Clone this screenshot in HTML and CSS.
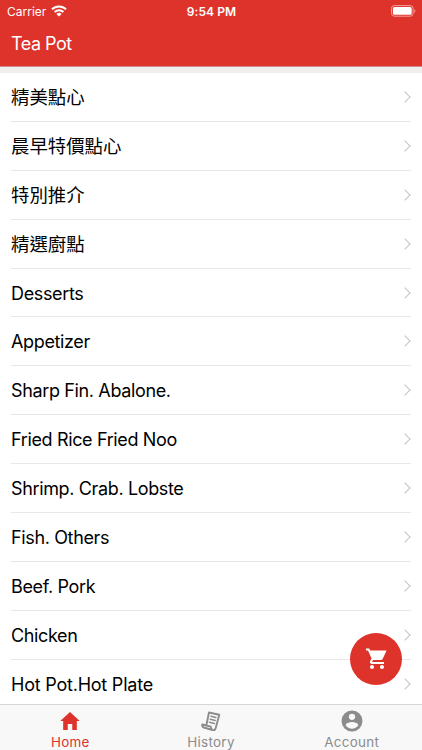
FILE: index.html
```html
<!DOCTYPE html>
<html lang="en">
<head>
    <meta charset="UTF-8">
    <meta name="viewport" content="width=device-width, initial-scale=1.0">
    <title>Tea Pot</title>
    <link rel="stylesheet" href="styles.css">
</head>
<body>
    <div class="app">
        <header class="header">
            <div class="status">
                <div class="carrier">
                    <span>Carrier</span>
                    <svg class="wifi" viewBox="0 0 16 12">
                        <path d="M1 4.3a10 10 0 0 1 14 0M3.6 7a6.3 6.3 0 0 1 8.8 0" fill="none" stroke="#fff" stroke-width="2"/>
                        <path d="M8 11.6L5.4 9a3.7 3.7 0 0 1 5.2 0z" fill="#fff"/>
                    </svg>
                </div>
                <div class="time">9:54 PM</div>
                <svg class="battery" viewBox="0 0 25 12">
                    <rect x="0.5" y="0.6" width="21.6" height="10.6" rx="2.8" fill="none" stroke="#f2a19c"/>
                    <rect x="1.9" y="2" width="18.8" height="7.8" rx="1.6" fill="#fff"/>
                    <path d="M23.4 4v4c1.3-.7 1.3-3.3 0-4z" fill="#f2a19c"/>
                </svg>
            </div>
            <h1 class="title">Tea Pot</h1>
        </header>

        <ul class="menu">
            <li><span class="zh">精美點心</span><i class="arrow"></i></li>
            <li><span class="zh">晨早特價點心</span><i class="arrow"></i></li>
            <li><span class="zh">特別推介</span><i class="arrow"></i></li>
            <li><span class="zh">精選廚點</span><i class="arrow"></i></li>
            <li><span>Desserts</span><i class="arrow"></i></li>
            <li><span>Appetizer</span><i class="arrow"></i></li>
            <li><span>Sharp Fin. Abalone.</span><i class="arrow"></i></li>
            <li><span>Fried Rice Fried Noo</span><i class="arrow"></i></li>
            <li><span>Shrimp. Crab. Lobste</span><i class="arrow"></i></li>
            <li><span>Fish. Others</span><i class="arrow"></i></li>
            <li><span>Beef. Pork</span><i class="arrow"></i></li>
            <li><span>Chicken</span><i class="arrow"></i></li>
            <li><span class="wide">Hot Pot.Hot Plate</span><i class="arrow"></i></li>
        </ul>

        <button class="cart" aria-label="Cart">
            <svg viewBox="0 0 24 24"><path d="M7 18c-1.1 0-2 .9-2 2s.9 2 2 2 2-.9 2-2-.9-2-2-2zM1 1.6v2h2l3.6 7.8-1.4 2.5c-.8 1.4.2 3.1 1.8 3.1h12v-2H7.4c-.2 0-.3-.2-.2-.4l.9-1.6h7.9c.7 0 1.300-.4 1.600-1L21.600 3.600H5.200l-.9-2H1zm16 16.400c-1.100 0-2 .9-2 2s.9 2 2 2 2-.9 2-2-.9-2-2-2z"/></svg>
        </button>

        <nav class="tabs">
            <a class="tab active">
                <svg viewBox="0 0 512 512"><path d="M208 448V320h96v128h97.600V256H464L256 64 48 256h62.400v192z"/></svg>
                <span>Home</span>
            </a>
            <a class="tab">
                <svg viewBox="0 0 24 24"><g fill="none" stroke="#8c8c8c" stroke-width="1.900" stroke-linejoin="round" stroke-linecap="round"><path d="M7.500 15.500L10 3.500l10.300 2.200-3.600 13.400c-.5 1.600-1.700 2.300-3 1.900L4.700 18.500c-1.200-.4-1.700-1.600-1.500-3l8.600 2.200c0 1.700.5 2.800 1.800 3.300"/><path d="M11.900 7.200l5 1.200M11.200 10.200l5 1.200M10.400 13.200l5 1.200" stroke-width="1.500"/></g></svg>
                <span>History</span>
            </a>
            <a class="tab">
                <svg viewBox="0 0 512 512"><path d="M256 32a224 224 0 1 0 0 448 224 224 0 0 0 0-448zm0 67.200a67.200 67.200 0 1 1 0 134.400 67.200 67.200 0 0 1 0-134.400zm0 322.600c-56 0-105.300-30.200-134.400-73.900 1-44.800 89.600-69.400 134.400-69.400s133.300 24.600 134.400 69.400c-29.100 43.700-78.400 73.900-134.400 73.900z"/></svg>
                <span>Account</span>
            </a>
        </nav>
    </div>
</body>
</html>
```
FILE: styles.css
```css
* { box-sizing: border-box; }
body { margin: 0; font-family: Inter, "Noto Sans CJK TC", sans-serif; color: #000; background: #fff; }
.app { position: relative; display: flex; flex-direction: column; height: 750px; overflow: hidden; }

.header { flex: none; height: 67px; background: #de332b; color: #fff; border-bottom: 1px solid #cf8f8c; }
.status { display: grid; grid-template-columns: 1fr auto 1fr; align-items: center; height: 22px; padding: 0 6px 0 7px; font-size: 12px; }
.carrier { display: flex; align-items: center; gap: 5px; }
.wifi { width: 16px; height: 12px; }
.time { font-weight: 600; letter-spacing: 0.1px; }
.battery { width: 25px; height: 12px; justify-self: end; }
.title { margin: 0; padding-left: 11px; font-size: 18px; font-weight: 400; line-height: 43px; letter-spacing: -0.5px; }

.menu { flex: 1; min-height: 0; margin: 0; padding: 0; list-style: none; overflow: hidden; border-top: 6px solid #efeff0; }
.menu li { display: flex; align-items: center; justify-content: space-between; height: 48.9px; margin: 0 11px; border-bottom: 1px solid #e8e8ea; font-size: 18px; letter-spacing: -0.36px; white-space: nowrap; }
.menu li span { padding-top: 1px; }
.menu li .zh { padding: 0 0 2px; font-family: "Noto Sans CJK TC", sans-serif; font-size: 18.4px; letter-spacing: 0; }
.menu li .wide { letter-spacing: -0.22px; }
.arrow { width: 8px; height: 8px; margin-right: 2px; border: solid #c3c3c8; border-width: 1.5px 1.5px 0 0; transform: rotate(45deg); }

.cart { position: absolute; left: 350px; top: 633px; width: 52px; height: 52px; padding: 0; border: none; border-radius: 50%; background: #de332b; display: flex; align-items: center; justify-content: center; }
.cart svg { width: 24px; height: 24px; margin-left: 1px; fill: #fff; }

.tabs { flex: none; display: flex; height: 46px; background: #f8f8f8; border-top: 1px solid #d6d6d8; }
.tab { flex: 1; display: flex; flex-direction: column; align-items: center; padding-top: 4px; font-size: 13.4px; letter-spacing: 0.3px; color: #8c8c8c; }
.tab svg { flex: none; width: 24px; height: 24px; fill: currentColor; }
.tab span { line-height: 18px; }
.active { color: #de332b; }
```
